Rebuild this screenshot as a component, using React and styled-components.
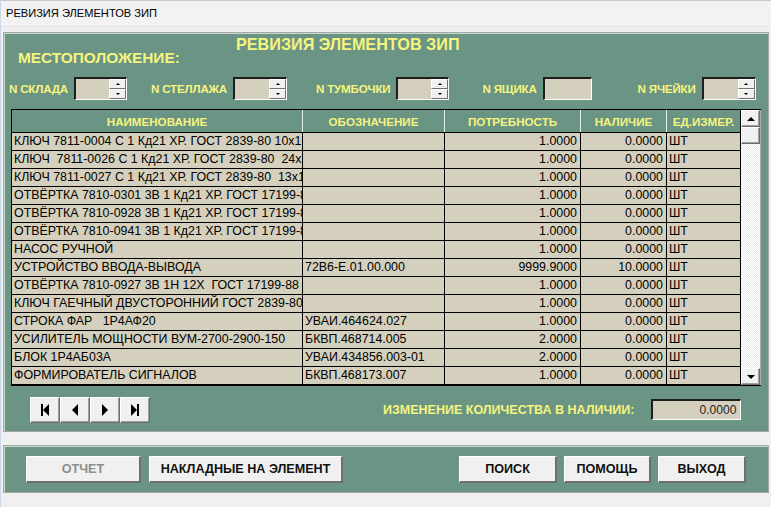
import React from "react";
import styled, { createGlobalStyle } from "styled-components";

const GREEN = "#6a9585";
const YELLOW = "#f6f47e";
const CELL = "#d5d0bd";

const GlobalStyle = createGlobalStyle`
  body {
    margin: 0;
    background: #f0f0f0;
    font-family: "Liberation Sans", Arial, sans-serif;
  }
`;

const rows = [
  ["КЛЮЧ 7811-0004 С 1 Кд21 ХР. ГОСТ 2839-80 10х12", "", "1.0000", "0.0000", "ШТ"],
  ["КЛЮЧ  7811-0026 С 1 Кд21 ХР. ГОСТ 2839-80  24х27", "", "1.0000", "0.0000", "ШТ"],
  ["КЛЮЧ 7811-0027 С 1 Кд21 ХР. ГОСТ 2839-80  13х17", "", "1.0000", "0.0000", "ШТ"],
  ["ОТВЁРТКА 7810-0301 3В 1 Кд21 ХР. ГОСТ 17199-88", "", "1.0000", "0.0000", "ШТ"],
  ["ОТВЁРТКА 7810-0928 3В 1 Кд21 ХР. ГОСТ 17199-88", "", "1.0000", "0.0000", "ШТ"],
  ["ОТВЁРТКА 7810-0941 3В 1 Кд21 ХР. ГОСТ 17199-88", "", "1.0000", "0.0000", "ШТ"],
  ["НАСОС РУЧНОЙ", "", "1.0000", "0.0000", "ШТ"],
  ["УСТРОЙСТВО ВВОДА-ВЫВОДА", "72В6-Е.01.00.000", "9999.9000", "10.0000", "ШТ"],
  ["ОТВЁРТКА 7810-0927 3В 1Н 12Х  ГОСТ 17199-88", "", "1.0000", "0.0000", "ШТ"],
  ["КЛЮЧ ГАЕЧНЫЙ ДВУСТОРОННИЙ ГОСТ 2839-80", "", "1.0000", "0.0000", "ШТ"],
  ["СТРОКА ФАР   1Р4АФ20", "УВАИ.464624.027", "1.0000", "0.0000", "ШТ"],
  ["УСИЛИТЕЛЬ МОЩНОСТИ ВУМ-2700-2900-150", "БКВП.468714.005", "2.0000", "0.0000", "ШТ"],
  ["БЛОК 1Р4АБ03А", "УВАИ.434856.003-01", "2.0000", "0.0000", "ШТ"],
  ["ФОРМИРОВАТЕЛЬ СИГНАЛОВ", "БКВП.468173.007", "1.0000", "0.0000", "ШТ"],
];

const columns = ["НАИМЕНОВАНИЕ", "ОБОЗНАЧЕНИЕ", "ПОТРЕБНОСТЬ", "НАЛИЧИЕ", "ЕД.ИЗМЕР."];
const GRID = "291px 142px 136px 86px 74px";

const fields = [
  { label: "N СКЛАДА", gap: 0, spin: true, width: 53 },
  { label: "N СТЕЛЛАЖА", gap: 24, spin: true, width: 54 },
  { label: "N ТУМБОЧКИ", gap: 29, spin: true, width: 53 },
  { label: "N ЯЩИКА", gap: 33, spin: false, width: 49 },
  { label: "N ЯЧЕЙКИ", gap: 46, spin: true, width: 54 },
];

export default function App() {
  return (
    <>
      <GlobalStyle />
      <Window>
        <TitleBar>РЕВИЗИЯ ЭЛЕМЕНТОВ ЗИП</TitleBar>

        <MainPanel>
          <Heading>РЕВИЗИЯ ЭЛЕМЕНТОВ ЗИП</Heading>
          <Location>МЕСТОПОЛОЖЕНИЕ:</Location>

          <FieldRow>
            {fields.map((f) => (
              <FieldGroup key={f.label} $gap={f.gap}>
                <FieldLabel>{f.label}</FieldLabel>
                <SunkenBox $width={f.width}>
                  {f.spin && (
                    <Spinner>
                      <SpinButton>
                        <Arrow $dir="up" $size={2} />
                      </SpinButton>
                      <SpinButton>
                        <Arrow $dir="down" $size={2} />
                      </SpinButton>
                    </Spinner>
                  )}
                </SunkenBox>
              </FieldGroup>
            ))}
          </FieldRow>

          <TableBox>
            <Grid>
              <HeadRow>
                {columns.map((c) => (
                  <HeadCell key={c}>{c}</HeadCell>
                ))}
              </HeadRow>
              {rows.map((r, i) => (
                <BodyRow key={i}>
                  <Cell>{r[0]}</Cell>
                  <Cell>{r[1]}</Cell>
                  <Cell $right>{r[2]}</Cell>
                  <Cell $right>{r[3]}</Cell>
                  <Cell>{r[4]}</Cell>
                </BodyRow>
              ))}
            </Grid>
            <ScrollBar>
              <ScrollButton>
                <Arrow $dir="up" $size={4} />
              </ScrollButton>
              <Thumb />
              <Track />
              <ScrollButton>
                <Arrow $dir="down" $size={4} />
              </ScrollButton>
            </ScrollBar>
          </TableBox>

          <NavRow>
            <NavGroup>
              <NavButton>
                <Bar />
                <Arrow $dir="left" $size={5} />
              </NavButton>
              <NavButton>
                <Arrow $dir="left" $size={5} />
              </NavButton>
              <NavButton>
                <Arrow $dir="right" $size={5} />
              </NavButton>
              <NavButton>
                <Arrow $dir="right" $size={5} />
                <Bar />
              </NavButton>
            </NavGroup>
            <ChangeLabel>ИЗМЕНЕНИЕ КОЛИЧЕСТВА В НАЛИЧИИ:</ChangeLabel>
            <ValueBox>0.0000</ValueBox>
          </NavRow>
        </MainPanel>

        <ButtonPanel>
          <PushButton $width={115} disabled>
            ОТЧЕТ
          </PushButton>
          <PushButton $width={194} $gap={8}>
            НАКЛАДНЫЕ НА ЭЛЕМЕНТ
          </PushButton>
          <PushButton $width={98} $gap={116}>
            ПОИСК
          </PushButton>
          <PushButton $width={87} $gap={7}>
            ПОМОЩЬ
          </PushButton>
          <PushButton $width={88} $gap={7}>
            ВЫХОД
          </PushButton>
        </ButtonPanel>
      </Window>
    </>
  );
}

const Window = styled.div`
  width: 771px;
  height: 507px;
  overflow: hidden;
  background: #f0f0f0;
  border-left: 1px solid #c9d7e6;
  box-sizing: border-box;
`;

const TitleBar = styled.div`
  height: 27px;
  box-sizing: border-box;
  padding: 6px 0 0 5px;
  font-size: 11.1px;
  color: #000;
  border-top: 1px solid #c8c8c8;
  border-bottom: 1px solid #e4e4e4;
  background: #f2f2f2;
`;

const Panel = styled.div`
  margin: 0 2px 0 2px;
  background: ${GREEN};
  border: 1px solid #a3a8a5;
  box-shadow: inset 1px 1px 0 #c9dad3;
`;

const MainPanel = styled(Panel)`
  margin-top: 5px;
  height: 400px;
  box-sizing: border-box;
  padding: 3px 0 0 0;
`;

const Heading = styled.div`
  margin-left: 232px;
  font-size: 16.2px;
  line-height: 16px;
  font-weight: bold;
  color: ${YELLOW};
`;

const Location = styled.div`
  margin: -2px 0 0 14px;
  font-size: 15.4px;
  line-height: 16px;
  font-weight: bold;
  color: ${YELLOW};
`;

const FieldRow = styled.div`
  display: flex;
  align-items: center;
  height: 23px;
  margin: 11px 0 0 5px;
`;

const FieldGroup = styled.div`
  display: flex;
  align-items: center;
  gap: 6px;
  margin-left: ${(p) => p.$gap}px;
`;

const FieldLabel = styled.span`
  font-size: 11.6px;
  font-weight: bold;
  color: ${YELLOW};
  letter-spacing: -0.2px;
`;

const SunkenBox = styled.div`
  width: ${(p) => p.$width}px;
  height: 23px;
  box-sizing: border-box;
  background: ${CELL};
  border-top: 2px solid #1e1e1e;
  border-left: 2px solid #1e1e1e;
  border-right: 1px solid #fff;
  border-bottom: 1px solid #fff;
  display: flex;
  justify-content: flex-end;
`;

const Spinner = styled.div`
  display: flex;
  flex-direction: column;
  width: 17px;
  height: 20px;
`;

const SpinButton = styled.div`
  flex: 1;
  display: flex;
  align-items: center;
  justify-content: center;
  background: #f0f0f0;
  border-top: 1px solid #fff;
  border-left: 1px solid #fff;
  border-right: 1px solid #6f6f6f;
  border-bottom: 1px solid #6f6f6f;
`;

const Arrow = styled.span`
  display: block;
  width: 0;
  height: 0;
  border-style: solid;
  border-color: transparent;
  border-width: ${(p) => p.$size}px;
  ${(p) =>
    p.$dir === "up"
      ? `border-bottom-color: #000; border-top-width: 0;`
      : p.$dir === "down"
      ? `border-top-color: #000; border-bottom-width: 0;`
      : p.$dir === "left"
      ? `border-right-color: #000; border-width: 6px 6px 6px 0;`
      : `border-left-color: #000; border-width: 6px 0 6px 6px;`}
`;

const Bar = styled.span`
  display: block;
  width: 2px;
  height: 12px;
  background: #000;
`;

const TableBox = styled.div`
  display: flex;
  margin: 9px 0 0 7px;
  width: 750px;
  height: 277px;
  border: 1px solid #000;
  border-right: none;
  box-sizing: border-box;
`;

const Grid = styled.div`
  display: flex;
  flex-direction: column;
  width: 730px;
`;

const HeadRow = styled.div`
  display: grid;
  grid-template-columns: ${GRID};
  height: 24px;
  background: ${GREEN};
  border-bottom: 1px solid #000;
`;

const HeadCell = styled.div`
  display: flex;
  align-items: center;
  justify-content: center;
  font-size: 11.6px;
  font-weight: bold;
  color: ${YELLOW};
  border-right: 1px solid #e6ece9;
  white-space: nowrap;
  &:last-child {
    border-right: 1px solid #000;
  }
`;

const BodyRow = styled.div`
  display: grid;
  grid-template-columns: ${GRID};
  height: 18px;
`;

const Cell = styled.div`
  background: ${CELL};
  border-right: 1px solid #000;
  border-bottom: 1px solid #000;
  font-size: 12.4px;
  line-height: 17px;
  color: #000;
  white-space: pre;
  overflow: hidden;
  padding: 0 ${(p) => (p.$right ? "3px" : "0")} 0 2px;
  text-align: ${(p) => (p.$right ? "right" : "left")};
`;

const ScrollBar = styled.div`
  width: 20px;
  display: flex;
  flex-direction: column;
  background: #fff;
  border-right: 1px solid #a9aeab;
`;

const Raised = `
  background: #f0f0f0;
  box-sizing: border-box;
  border-top: 1px solid #fff;
  border-left: 1px solid #fff;
  border-right: 1px solid #6e6e6e;
  border-bottom: 1px solid #6e6e6e;
  box-shadow: inset -1px -1px 0 #a0a0a0;
`;

const ScrollButton = styled.div`
  ${Raised}
  height: 17px;
  display: flex;
  align-items: center;
  justify-content: center;
`;

const Thumb = styled.div`
  ${Raised}
  height: 17px;
`;

const Track = styled.div`
  flex: 1;
  background: repeating-conic-gradient(#ffffff 0 25%, #ececec 0 50%) 0 0 / 2px 2px;
`;

const NavRow = styled.div`
  display: flex;
  align-items: center;
  margin: 11px 0 0 26px;
  height: 26px;
`;

const NavGroup = styled.div`
  display: flex;
  width: 120px;
`;

const NavButton = styled.div`
  ${Raised}
  width: 30px;
  height: 26px;
  display: flex;
  align-items: center;
  justify-content: center;
`;

const ChangeLabel = styled.span`
  margin-left: 233px;
  font-size: 12.5px;
  font-weight: bold;
  color: ${YELLOW};
`;

const ValueBox = styled.div`
  margin: -2px 0 0 17px;
  width: 90px;
  height: 21px;
  box-sizing: border-box;
  background: ${CELL};
  border-top: 2px solid #1e1e1e;
  border-left: 2px solid #1e1e1e;
  border-right: 1px solid #fff;
  border-bottom: 1px solid #fff;
  font-size: 12px;
  line-height: 18px;
  text-align: right;
  padding-right: 4px;
  color: #222;
`;

const ButtonPanel = styled(Panel)`
  margin-top: 13px;
  height: 48px;
  box-sizing: border-box;
  display: flex;
  align-items: center;
  padding: 0 0 0 22px;
`;

const PushButton = styled.button`
  ${Raised}
  border-right: 2px solid #6e6e6e;
  border-bottom: 2px solid #6e6e6e;
  box-shadow: none;
  width: ${(p) => p.$width}px;
  height: 27px;
  margin: 0 0 0 ${(p) => p.$gap || 0}px;
  padding: 0;
  font-family: "Liberation Sans", Arial, sans-serif;
  font-size: 12.6px;
  font-weight: bold;
  color: #111;
  &:disabled {
    color: #8d8d8d;
  }
`;
